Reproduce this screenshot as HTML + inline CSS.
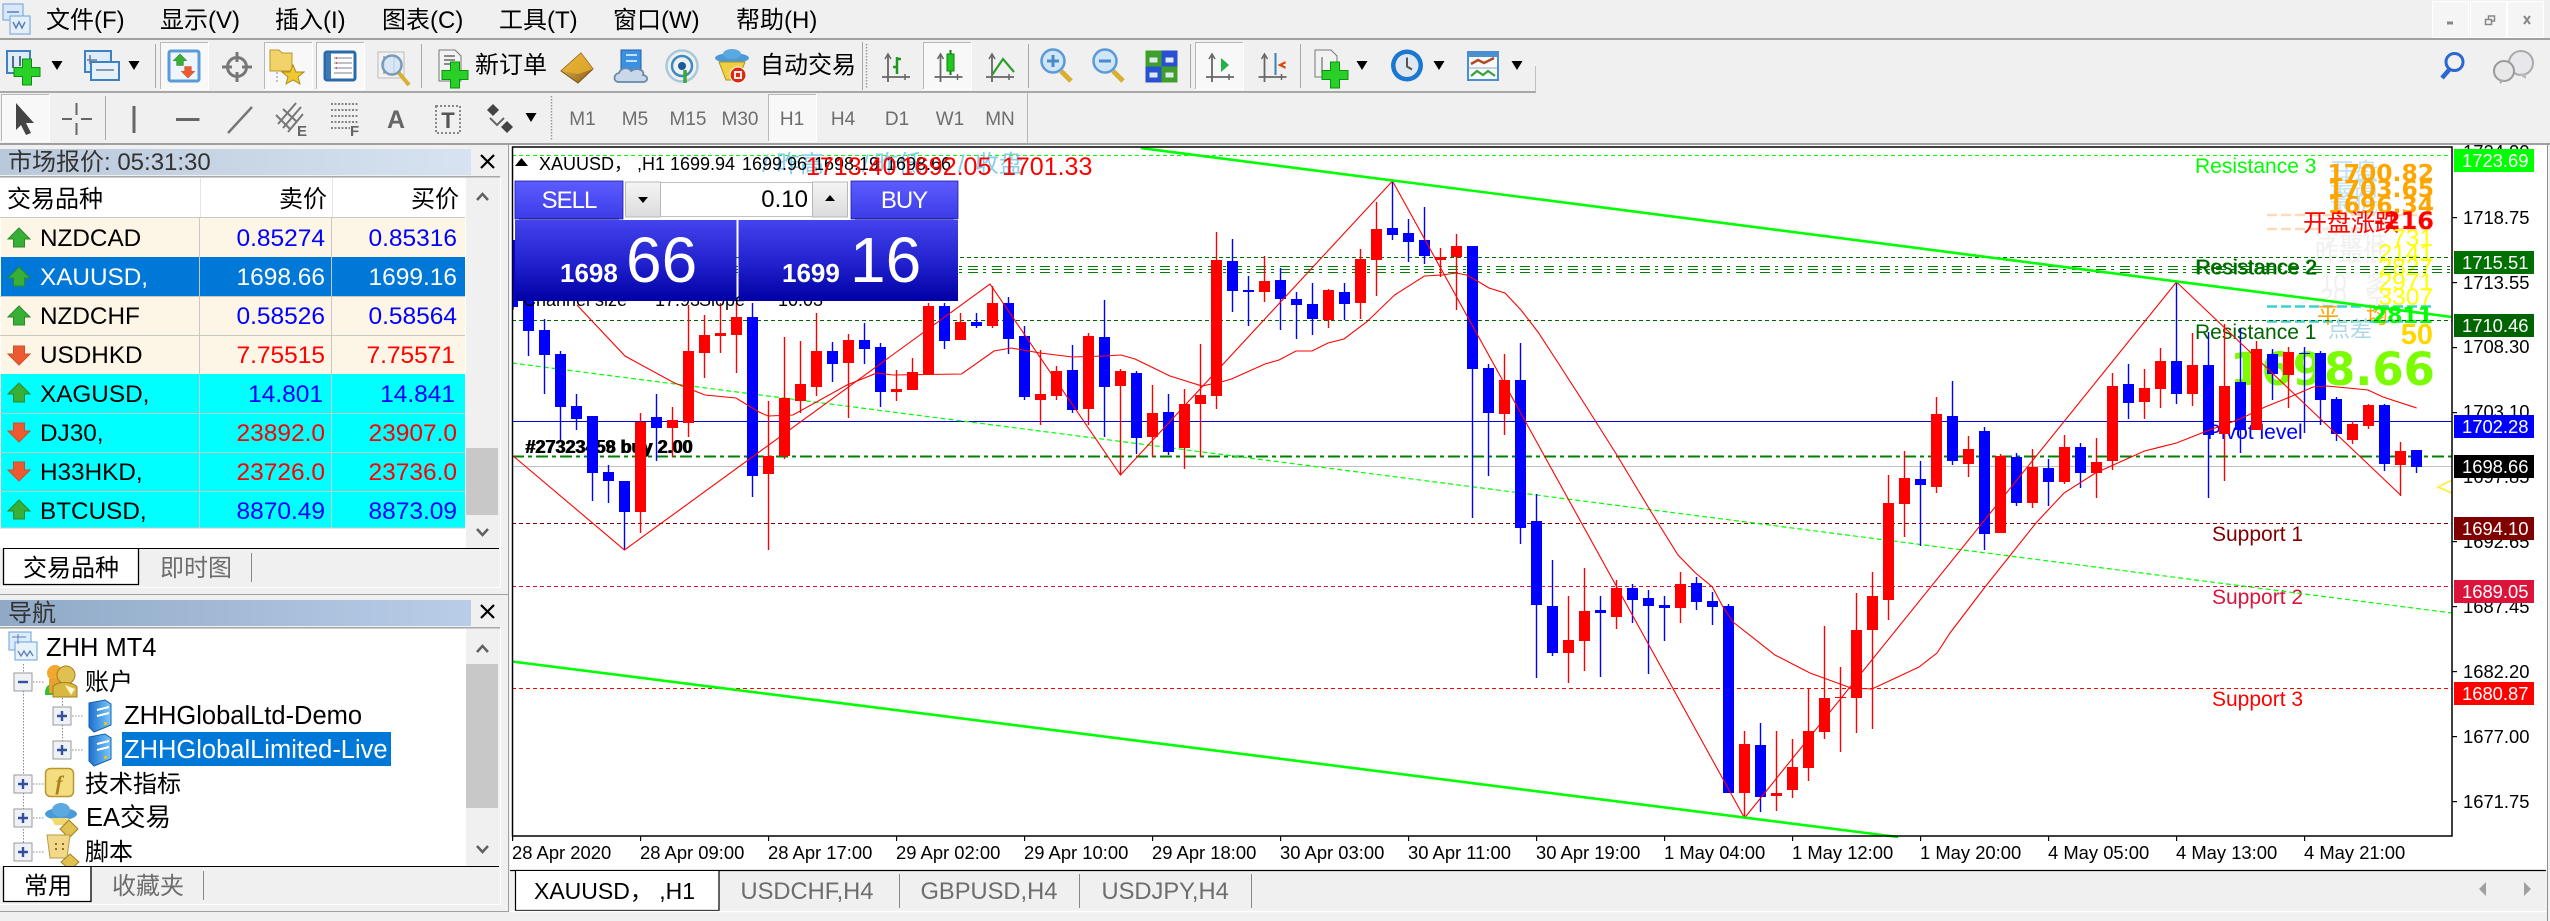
<!DOCTYPE html>
<html><head><meta charset="utf-8"><style>
html,body{margin:0;padding:0;background:#f0f0f0;width:2550px;height:921px;overflow:hidden}
svg{display:block}
text{font-family:"Liberation Sans","Noto Sans CJK SC",sans-serif;white-space:pre}
.u{font-size:24px;fill:#000}
.v{font-size:25.500px;fill:#000}
.s{font-size:24.300px;fill:#000}
.g{font-size:24px;fill:#6d6d6d}
.t{font-size:18.400px;fill:#000}
.l{font-size:18.400px;fill:#fff}
.p{font-size:19px;fill:#6d6d6d;text-anchor:middle}
.n{font-size:24.500px;text-anchor:end}
.r{font-size:21px}
text.db,.db text{font-family:"DejaVu Sans",sans-serif;font-weight:bold}
</style></head><body>
<svg width="2550" height="921" viewBox="0 0 2550 921" xmlns="http://www.w3.org/2000/svg">
<defs>
<linearGradient id="tA" x1="0" x2="1" y1="0" y2="0"><stop offset="0" stop-color="#b9c8da"/><stop offset="1" stop-color="#d7e3f1"/></linearGradient>
<linearGradient id="tB" x1="0" x2="1" y1="0" y2="0"><stop offset="0" stop-color="#8fa9c6"/><stop offset="1" stop-color="#b9cde8"/></linearGradient>
<linearGradient id="bS" x1="0" x2="0" y1="0" y2="1"><stop offset="0" stop-color="#5c5cff"/><stop offset="1" stop-color="#3c3ce8"/></linearGradient>
<linearGradient id="bB" x1="0" x2="0" y1="0" y2="1"><stop offset="0" stop-color="#4444ee"/><stop offset=".55" stop-color="#2020cc"/><stop offset="1" stop-color="#0000a4"/></linearGradient>
<linearGradient id="sp" x1="0" x2="0" y1="0" y2="1"><stop offset="0" stop-color="#f4f4f4"/><stop offset="1" stop-color="#dcdcdc"/></linearGradient>
<linearGradient id="gold" x1="0" x2="1" y1="0" y2="1"><stop offset="0" stop-color="#f0c860"/><stop offset="1" stop-color="#8a5a10"/></linearGradient>
<linearGradient id="srv" x1="0" x2="1" y1="0" y2="0"><stop offset="0" stop-color="#1a70d0"/><stop offset="1" stop-color="#7cc8f8"/></linearGradient>
<g id="plus"><path d="M-4.500-13h9v8.500h8.500v9h-8.500v8.500h-9v-8.500h-8.500v-9h8.500z" fill="#28d028" stroke="#0c900c" stroke-width="1"/></g>
<g id="up"><path d="M0-10 11 1H5.500V9H-5.500V1H-11z" fill="#38b038" stroke="#2a8a2a" stroke-width="1"/></g>
<g id="dn"><path d="M0 10 11-1H5.500V-9H-5.500V-1H-11z" fill="#ee5a30" stroke="#c85030" stroke-width="1"/></g>
<g id="axes" fill="none" stroke="#666" stroke-width="1.800"><path d="M0-13V14M-6 9H22"/><path d="M-3-9 0-14 3-9M17 6V12" stroke-width="1.500"/></g>
<g id="drop"><path d="M-5.500-5H5.500L0 4z" fill="#000"/></g>
<g id="pb"><rect x="-9" y="-9" width="18" height="18" fill="#eef1f6" stroke="#9a9a9a"/><path d="M-5 0H5M0-5V5" stroke="#34509c" stroke-width="2.400"/></g>
<g id="mb"><rect x="-9" y="-9" width="18" height="18" fill="#eef1f6" stroke="#9a9a9a"/><path d="M-5 0H5" stroke="#34509c" stroke-width="2.400"/></g>
<g id="srvi"><path d="M-11-13 5-16 11-12V9L-6 16-11 11z" fill="url(#srv)" stroke="#1060b0"/><path d="M-3-6 9-9M-3 0 9-3" stroke="#fff" stroke-width="2"/><rect x="4" y="6" width="3" height="3" fill="#e8c020"/></g>
</defs>

<!-- base -->
<rect width="2550" height="921" fill="#f0f0f0"/>

<!-- menu -->
<g transform="translate(3,2)"><rect x="0" y="2" width="20" height="16" fill="#d8e8f8" stroke="#6aa0d8"/><rect x="7" y="14" width="20" height="18" fill="#e4effa" stroke="#6aa0d8"/><path d="M4 10h12M10 20l3 6 3-6 3 6 3-6" fill="none" stroke="#5a7fb5" stroke-width="1.500"/></g>
<text class="u" x="46" y="28">文件(F)</text>
<text class="u" x="160" y="28">显示(V)</text>
<text class="u" x="275" y="28">插入(I)</text>
<text class="u" x="382" y="28">图表(C)</text>
<text class="u" x="499" y="28">工具(T)</text>
<text class="u" x="613" y="28">窗口(W)</text>
<text class="u" x="736" y="28">帮助(H)</text>
<g fill="#f5f5f5" stroke="#fff"><rect x="2432.500" y="1.500" width="36" height="36"/><rect x="2470.500" y="1.500" width="36" height="36"/><rect x="2507.500" y="1.500" width="36" height="36"/></g>
<rect x="2447" y="21.500" width="6" height="3" fill="#888"/>
<path d="M2485.500 24.500v-5h6v5zM2488.500 19v-3h6v5h-3" fill="none" stroke="#888" stroke-width="1.500"/>
<path d="M2524 16l6 8M2530 16l-6 8" stroke="#888" stroke-width="2" fill="none"/>
<rect x="0" y="38" width="2550" height="2" fill="#a0a0a0"/>

<!-- toolbar lines -->
<rect x="0" y="91" width="1536" height="2" fill="#a8a8a8"/>
<rect x="1535" y="66" width="1" height="26" fill="#c0c0c0"/>
<rect x="0" y="143" width="2550" height="2" fill="#a0a0a0"/>
<rect x="1027" y="93" width="1" height="50" fill="#b8b8b8"/>

<!-- pressed boxes -->
<g fill="#f8f8f8" stroke="#fff">
<rect x="160.500" y="42.500" width="48" height="47"/><rect x="264.500" y="42.500" width="48" height="47"/><rect x="316.500" y="42.500" width="48" height="47"/>
<rect x="923.500" y="42.500" width="48" height="47"/><rect x="1195.500" y="42.500" width="48" height="47"/>
<rect x="1.500" y="94.500" width="48" height="47"/><rect x="768.500" y="94.500" width="48" height="47"/></g>
<path d="M160.500 89V42.500H208M264.500 89V42.500H312M316.500 89V42.500H364M923.500 89V42.500H971M1195.500 89V42.500H1243M1.500 141V94.500H49M768.500 141V94.500H816" fill="none" stroke="#b8b8b8"/>
<!-- seps -->
<g fill="#a8a8a8"><rect x="155" y="44" width="1" height="44"/><rect x="421" y="44" width="1" height="44"/><rect x="862" y="42" width="1" height="48"/><rect x="1028" y="44" width="1" height="44"/><rect x="1190" y="44" width="1" height="44"/><rect x="1300" y="44" width="1" height="44"/><rect x="105" y="96" width="1" height="44"/></g>
<path d="M866.500 44V88M551.500 96V140" stroke="#999" stroke-dasharray="1.500 1.500" stroke-width="1.500"/>

<!-- TB1 icons -->
<g transform="translate(18,61)"><rect x="-11" y="-10" width="23" height="22" fill="#dcecfa" stroke="#3f80c0" stroke-width="2"/><path d="M-5-5V7M2-5V5" stroke="#5a6a80" stroke-width="2"/><use href="#plus" x="9" y="11"/></g>
<use href="#drop" x="57" y="66"/>
<g transform="translate(100,64)"><rect x="-15" y="-13" width="26" height="21" fill="#dcecfa" stroke="#3f80c0" stroke-width="2"/><rect x="-9" y="-2" width="28" height="18" fill="#e6f1fb" stroke="#3f80c0" stroke-width="2"/><path d="M-10-9V0M-13-4h10M-4 6H14" stroke="#6a7a90" stroke-width="1.500" fill="none"/></g>
<use href="#drop" x="134" y="66"/>
<g transform="translate(184,66)"><rect x="-15" y="-15" width="30" height="30" rx="2" fill="#eef5fc" stroke="#5a9ad8" stroke-width="3"/><use href="#up" transform="translate(-4,-6) scale(.6)"/><use href="#dn" transform="translate(4,6) scale(.6)"/></g>
<g transform="translate(237,67)" fill="none" stroke="#777" stroke-width="3"><circle r="9.500"/><path d="M0-15V-5M0 5V15M-15 0H-5M5 0H15"/></g>
<g transform="translate(287,65)"><path d="M-17-15H-8L-5-12H5V6H-17z" fill="#f2d36a" stroke="#b89a30"/><path d="M6 0 9 7 17 7 11 12 13 19 6 15-1 19 1 12-5 7 3 7z" fill="#f2c830" stroke="#a88a20"/><path d="M-10 7V18" stroke="#888" stroke-dasharray="2 2"/></g>
<g transform="translate(340,66)"><rect x="-15" y="-14" width="30" height="28" rx="2" fill="#fff" stroke="#2a6aa8" stroke-width="3"/><rect x="-14" y="-13" width="5" height="26" fill="#3a7ab8"/><path d="M-6-8H12M-6-3H12M-6 2H12M-6 7H12" stroke="#99a" stroke-width="1.300"/><path d="M-4-8h1M-4-3h1M-4 2h1" stroke="#e44" stroke-width="2"/></g>
<g transform="translate(392,66)"><rect x="-14" y="-14" width="26" height="26" fill="#f2f2f2" stroke="#bbb"/><path d="M-8-10V8M2-10V8" stroke="#999" stroke-width="1.500"/><circle cx="0" cy="-1" r="9.500" fill="#cfe3f5" fill-opacity=".8" stroke="#7a9ab8" stroke-width="2.500"/><path d="M7 7 17 19" stroke="#d8b030" stroke-width="4"/></g>
<g transform="translate(451,65)"><path d="M-12-15H4L10-9V16H-12z" fill="#f2f2f2" stroke="#777"/><path d="M-7-9H4M-7-5H4M-7-1H0" stroke="#666" stroke-width="1.500"/><use href="#plus" x="4" y="10"/></g>
<text class="u" x="475" y="73">新订单</text>
<g transform="translate(577,68)"><path d="M4-15 16 1 1 15-16 3z" fill="url(#gold)" stroke="#7a5010"/><path d="M4-15-16 3 1 6 16 1z" fill="#e8b030" fill-opacity=".8"/></g>
<g transform="translate(631,65)"><path d="M-10-15H10V6H-10z" fill="#3c90e0" stroke="#1a60b0"/><path d="M-5-10H6M-5-4H6" stroke="#bfe4ff" stroke-width="2"/><path d="M-12 17C-18 17-18 9-12 8-10 2-2 2 0 6 6 2 14 5 12 10 18 11 17 17 12 17z" fill="#c8d8ea" stroke="#6a88a8" stroke-width="1.800"/></g>
<g transform="translate(682,66)" fill="none"><circle r="15.500" stroke="#a8c8dc" stroke-width="2.500"/><circle r="10" stroke="#3c8ac0" stroke-width="2.500"/><circle r="4" fill="#1a5a9a"/><path d="M3 4V17" stroke="#3aa83a" stroke-width="3.500"/></g>
<g transform="translate(732,66)"><ellipse cy="-8" rx="17" ry="5" fill="#4a9ad8"/><ellipse cy="-12" rx="9" ry="5" fill="#5aaae0"/><path d="M-13-4H13L6 14H-6z" fill="#f0d040" stroke="#b09020"/><circle cx="6" cy="9" r="8" fill="#e02810" stroke="#fff" stroke-width="1"/><rect x="2" y="5" width="8" height="8" fill="#fff" fill-opacity=".9"/><rect x="4" y="7" width="4" height="4" fill="#e02810"/></g>
<text class="u" x="760" y="73">自动交易</text>

<g transform="translate(888,68)"><use href="#axes"/><path d="M9-11V6M9-9H13M5-1H9" stroke="#1a9a1a" stroke-width="2.500" fill="none"/></g>
<g transform="translate(940.500,68)"><use href="#axes"/><path d="M10-18V7" stroke="#108010" stroke-width="2"/><rect x="6.500" y="-14" width="7" height="17" fill="#22c822" stroke="#108010"/></g>
<g transform="translate(992,68)"><use href="#axes"/><path d="M0 7 11-9 22 4" fill="none" stroke="#2aa02a" stroke-width="2.200"/></g>
<g transform="translate(1053,61)"><circle r="11.500" fill="#cfe6fa" stroke="#5a9ad8" stroke-width="2.500"/><path d="M-6 0H6M0-6V6" stroke="#4a8ac8" stroke-width="3"/><path d="M8 10 18 20" stroke="#d8b030" stroke-width="5"/></g>
<g transform="translate(1105,61)"><circle r="11.500" fill="#cfe6fa" stroke="#5a9ad8" stroke-width="2.500"/><path d="M-6 0H6" stroke="#4a8ac8" stroke-width="3"/><path d="M8 10 18 20" stroke="#d8b030" stroke-width="5"/></g>
<g transform="translate(1161.500,66.500)"><rect x="-16" y="-16" width="16" height="16" fill="#3ea028"/><rect x="0" y="-16" width="16" height="16" fill="#2850d0"/><rect x="-16" y="0" width="16" height="16" fill="#2850d0"/><rect x="0" y="0" width="16" height="16" fill="#3ea028"/><path d="M-12-9h8v5h-8zM4-9h8v5H4zM-12 6h8v5h-8zM4 6h8v5H4z" fill="#dde8f0"/></g>
<g transform="translate(1212,68)"><use href="#axes"/><path d="M9-10 17-3 9 4z" fill="#22b04a"/></g>
<g transform="translate(1264.500,68)"><use href="#axes"/><path d="M11-15V7" stroke="#3a80b8" stroke-width="2"/><path d="M13-3 21-7V-4H19V-2H21V1z" fill="#d84a10"/></g>
<g transform="translate(1326,65)"><path d="M-11-15H5L11-9V12H-11z" fill="#f2f2f2" stroke="#777"/><path d="M-4-8V8" stroke="#888" stroke-width="1.500"/><use href="#plus" x="9" y="10"/></g>
<use href="#drop" x="1362" y="66"/>
<g transform="translate(1407,65.500)"><circle r="16" fill="#1a78d0"/><circle r="11.500" fill="#dfe8f0"/><path d="M0-8V1L5 4" stroke="#555" stroke-width="2" fill="none"/></g>
<use href="#drop" x="1439" y="66"/>
<g transform="translate(1483,66)"><rect x="-15" y="-14" width="30" height="28" fill="#f6fafd" stroke="#4a90d0" stroke-width="2"/><rect x="-14" y="-13" width="28" height="4" fill="#4a90d0"/><path d="M-12-2-5-6 1-3 11-8" stroke="#b04a20" stroke-width="2.500" fill="none"/><path d="M-14 2H14" stroke="#9ab"/><path d="M-12 10-6 5 0 9 5 5 12 10" stroke="#3aa03a" stroke-width="2.200" fill="none"/></g>
<use href="#drop" x="1517" y="66"/>
<g fill="none"><circle cx="2454.500" cy="62" r="8.500" stroke="#2a68d0" stroke-width="3"/><path d="M2449 70 2442 78" stroke="#2a68d0" stroke-width="4.500"/></g>
<g><circle cx="2521" cy="63" r="12" fill="#e8e8ec" stroke="#aaa" stroke-width="2"/><path d="M2518 74 2526 79 2526 73z" fill="#bbb"/><circle cx="2504" cy="71" r="10" fill="#e8e8e8" stroke="#999" stroke-width="2"/><path d="M2499 79 2500 84 2505 80z" fill="#aaa"/></g>

<!-- TB2 -->
<path d="M16 103V130L21 125 26 135 31 133 26 123 34 123z" fill="#444"/>
<path d="M76.500 103V115M76.500 123V135M62 119H72M81 119H92" stroke="#666" stroke-width="2"/>
<path d="M134 106V133" stroke="#666" stroke-width="3"/>
<path d="M176 119.500H199.500" stroke="#666" stroke-width="3"/>
<path d="M228 133 252 107" stroke="#777" stroke-width="2.500"/>
<g stroke="#777" stroke-width="2" fill="none"><path d="M278 124 296 103M283 128 301 107M288 132 303 114M283 109 296 121M276 115 290 129"/></g>
<text x="297" y="136" font-size="15" font-weight="bold" fill="#666">E</text>
<g stroke="#777" stroke-width="1.800" stroke-dasharray="2 1.500"><path d="M331 104H358M331 110H358M331 116H358M331 122H358M331 128H350"/></g>
<text x="350" y="136" font-size="15" font-weight="bold" fill="#666">F</text>
<text x="396" y="128" font-size="25" font-weight="bold" fill="#666" text-anchor="middle">A</text>
<rect x="436" y="106" width="24" height="27" fill="none" stroke="#888" stroke-width="2" stroke-dasharray="2 2"/>
<text x="448" y="128" font-size="22" fill="#555" text-anchor="middle" font-weight="bold">T</text>
<g fill="#444"><path d="M493 104 499 110 493 116 487 110z"/><path d="M507 121 513 127 507 133 501 127z"/></g><path d="M490 118 497 125 504 118" fill="none" stroke="#666" stroke-width="2"/>
<use href="#drop" x="531" y="118"/>
<text class="p" x="582.500" y="125">M1</text><text class="p" x="635" y="125">M5</text><text class="p" x="688" y="125">M15</text><text class="p" x="740" y="125">M30</text><text class="p" x="792" y="125">H1</text><text class="p" x="843" y="125">H4</text><text class="p" x="897" y="125">D1</text><text class="p" x="950" y="125">W1</text><text class="p" x="1000" y="125">MN</text>

<!-- ===== Market Watch ===== -->
<rect x="0" y="143" width="508" height="1" fill="#a0a0a0"/>
<rect x="0" y="149" width="471" height="26" fill="url(#tA)"/>
<text x="8" y="170" font-size="24" fill="#333">市场报价: 05:31:30</text>
<path d="M481 155 494 168M494 155 481 168" stroke="#000" stroke-width="2.200"/>
<rect x="0" y="176" width="500" height="1.500" fill="#a8a8a8"/>
<rect x="0" y="178" width="466" height="370" fill="#fff"/>
<rect x="466" y="178" width="34" height="370" fill="#f0f0f0"/>
<rect x="466" y="448" width="32" height="67" fill="#c8c8c8"/>
<path d="M477 200 482.500 194 488 200M477 529 482.500 535 488 529" fill="none" stroke="#606060" stroke-width="2.500"/>
<text class="u" x="7" y="207">交易品种</text>
<text class="u" x="327" y="207" text-anchor="end">卖价</text>
<text class="u" x="459" y="207" text-anchor="end">买价</text>
<path d="M200.500 178V217M332.500 178V217" stroke="#e4e4e4"/>
<rect x="1" y="218" width="464" height="39" fill="#fdf5e6"/>
<rect x="1" y="257" width="464" height="39" fill="#0078d7"/>
<rect x="1" y="296" width="464" height="78" fill="#fdf5e6"/>
<rect x="1" y="374" width="464" height="154" fill="#0ff"/>
<g stroke="#c8c8c8"><path d="M0 217.500H465M0 296.500H465M0 335.500H465M0 413.500H465M0 452.500H465M0 491.500H465M0 528H465M199.500 218V528M331.500 218V528"/></g>
<use href="#up" x="19" y="238"/><use href="#up" x="19" y="277"/><use href="#up" x="19" y="316"/><use href="#dn" x="19" y="355"/><use href="#up" x="19" y="393"/><use href="#dn" x="19" y="432"/><use href="#dn" x="19" y="471"/><use href="#up" x="19" y="510"/>
<text class="s" x="40" y="246">NZDCAD</text>
<text class="s" x="40" y="285" style="fill:#fff">XAUUSD,</text>
<text class="s" x="40" y="324">NZDCHF</text>
<text class="s" x="40" y="363">USDHKD</text>
<text class="s" x="40" y="402">XAGUSD,</text>
<text class="s" x="40" y="441">DJ30,</text>
<text class="s" x="40" y="480">H33HKD,</text>
<text class="s" x="40" y="519">BTCUSD,</text>
<text class="n" x="325" y="246" fill="#00f">0.85274</text><text class="n" x="457" y="246" fill="#00f">0.85316</text>
<text class="n" x="325" y="324" fill="#00f">0.58526</text><text class="n" x="457" y="324" fill="#00f">0.58564</text>
<text class="n" x="323" y="402" fill="#00f">14.801</text><text class="n" x="455" y="402" fill="#00f">14.841</text>
<text class="n" x="325" y="519" fill="#00f">8870.49</text><text class="n" x="457" y="519" fill="#00f">8873.09</text>
<text class="n" x="325" y="285" fill="#fff">1698.66</text><text class="n" x="457" y="285" fill="#fff">1699.16</text>
<text class="n" x="325" y="363" fill="#f00">7.75515</text><text class="n" x="455" y="363" fill="#f00">7.75571</text>
<text class="n" x="325" y="441" fill="#f00">23892.0</text><text class="n" x="457" y="441" fill="#f00">23907.0</text>
<text class="n" x="325" y="480" fill="#f00">23726.0</text><text class="n" x="457" y="480" fill="#f00">23736.0</text>
<rect x="0" y="548" width="500" height="2" fill="#f0f0f0"/><path d="M3 548.500H499" stroke="#000"/>
<path d="M3.500 549V584.500H138.500V549H3.500z" fill="#fff"/><path d="M3.500 549V584.500H138.500V549" fill="none" stroke="#000" stroke-width="1.300"/>
<text class="u" x="23" y="576">交易品种</text>
<text class="g" x="160" y="576">即时图</text>
<path d="M251.500 553V582" stroke="#888"/>
<path d="M0 594.500H508M508.500 143V912" stroke="#a0a0a0"/>
<path d="M500.500 178V587" stroke="#fff"/>
<rect x="0" y="587" width="501" height="1" fill="#fff"/>

<!-- ===== Navigator ===== -->
<rect x="0" y="600" width="471" height="26" fill="url(#tB)"/>
<text x="8" y="621" font-size="24" fill="#333">导航</text>
<path d="M481 605 494 618M494 605 481 618" stroke="#000" stroke-width="2.200"/>
<rect x="0" y="627" width="500" height="1.500" fill="#a8a8a8"/>
<rect x="0" y="629" width="466" height="237" fill="#fff"/>
<rect x="466" y="629" width="34" height="237" fill="#f0f0f0"/>
<rect x="466" y="664" width="32" height="144" fill="#c8c8c8"/>
<path d="M477 652 482.500 646 488 652M477 846 482.500 852 488 846" fill="none" stroke="#606060" stroke-width="2.500"/>
<path d="M23.500 664V843M62.500 698V750M33 682H44M72 716H84M72 750H84M33 784H44M33 818H44M33 852H44" stroke="#888" stroke-dasharray="1.500 1.500" fill="none"/>
<g transform="translate(8,631)"><rect x="1" y="1" width="22" height="18" fill="#dcecfa" stroke="#6aa0d8"/><rect x="7" y="11" width="22" height="18" fill="#e8f2fb" stroke="#6aa0d8"/><path d="M10 20l3 5 3-5 3 5 3-5 3 5" fill="none" stroke="#5a7fb5" stroke-width="1.300"/><path d="M4 6h14M10 3v10" stroke="#5a7fb5"/></g>
<text class="v" x="46" y="656">ZHH MT4</text>
<use href="#mb" x="23" y="682"/>
<g transform="translate(61,681)"><path d="M-16 12C-16 4-10 2-8 4V14H-16z" fill="#30c030"/><circle cx="-6" cy="-8" r="8" fill="#f0a830"/><rect x="-12" y="-2" width="14" height="14" fill="#e8a030"/><circle cx="5" cy="-6" r="9" fill="#e0c050" stroke="#a08020"/><path d="M-8 16V6C-5 0 12 0 16 6V16z" fill="#d8b840" stroke="#a08020"/><path d="M4 4 10 14 14 8" fill="#fff8d0"/></g>
<text class="u" x="85" y="690">账户</text>
<use href="#pb" x="62" y="716"/><use href="#srvi" x="100" y="716"/>
<text class="v" x="124" y="724">ZHHGlobalLtd-Demo</text>
<use href="#pb" x="62" y="750"/><use href="#srvi" x="100" y="750"/>
<rect x="122" y="732" width="269" height="34" fill="#0078d7"/>
<text class="v" x="124" y="758" style="fill:#fff">ZHHGlobalLimited-Live</text>
<use href="#pb" x="23" y="784"/>
<rect x="45.500" y="768.500" width="28" height="28" rx="5" fill="#f4dc80" stroke="#b8982c" stroke-width="1.500"/>
<text x="59" y="790" font-size="21" style="font-family:'Liberation Serif',serif;font-style:italic;font-weight:bold" fill="#a8801c" text-anchor="middle">f</text>
<text class="u" x="85" y="792">技术指标</text>
<use href="#pb" x="23" y="818"/>
<g transform="translate(61,814)"><ellipse rx="16" ry="6" fill="#4a9ad8"/><ellipse cy="-4" rx="9" ry="7" fill="#5aaae0"/><path d="M-10 4H8L4 11H-6z" fill="#f0d870"/><path d="M8 6 17 15 8 24-1 15z" fill="#e0c050" stroke="#a08020"/></g>
<text class="v" x="86" y="826">EA交易</text>
<use href="#pb" x="23" y="852"/>
<g transform="translate(59,848)"><path d="M-12-13H11L8 10H-9z" fill="#f2d88a" stroke="#b89a40"/><path d="M-4-4h2M3-4h2M-4 1h2M3 1h2" stroke="#8a7028" stroke-width="2"/><path d="M11 6 20 14 11 22 2 14z" fill="#e0c050" stroke="#a08020"/></g>
<text class="u" x="85" y="860">脚本</text>
<rect x="0" y="866" width="500" height="46" fill="#f0f0f0"/>
<path d="M3 866.500H499" stroke="#000"/>
<path d="M3.500 867V901.500H91V867z" fill="#fff"/><path d="M3.500 867V901.500H91V867" fill="none" stroke="#000" stroke-width="1.300"/>
<text class="u" x="24" y="894">常用</text>
<text class="g" x="112" y="894">收藏夹</text>
<path d="M203.500 871V900" stroke="#888"/>
<path d="M0 904.500H501M500.500 628V904" stroke="#fff"/>
<path d="M0 911.500H508" stroke="#a0a0a0"/>

<!-- ===== Chart ===== -->
<rect x="510" y="145" width="2037" height="726" fill="#fff"/>
<path d="M2547.500 143V921" stroke="#909090"/>

<!-- labels below candles -->
<text class="r" x="2195" y="173" fill="#0f0">Resistance 3</text>
<text class="r" x="2195" y="274" fill="#008000">Resistance 2</text>
<text class="r" x="2196" y="274.500" fill="#006400">Resistance 2</text>
<text class="r" x="2195" y="339" fill="#006400">Resistance 1</text>
<text class="r" x="2207" y="439" fill="#00f">Pivot level</text>
<text class="r" x="2212" y="541" fill="#800000">Support 1</text>
<text class="r" x="2212" y="604" fill="#dc143c">Support 2</text>
<text class="r" x="2212" y="706" fill="#f00">Support 3</text>
<!-- info block -->
<g font-size="24" fill="#bfe3f2"><text x="2330" y="180">开盘</text><text x="2330" y="196">最高</text><text x="2330" y="212">最低</text></g>
<path d="M2267 215H2433M2267 229H2433" stroke="#ffdab9" stroke-width="2.500" stroke-dasharray="10 4"/>
<g font-size="24" fill="#f0f0f0"><text x="2315" y="246">今最低</text><text x="2315" y="261">昨最低</text><text x="2320" y="291">10</text><text x="2320" y="305">20</text><text x="2365" y="291">多</text><text x="2365" y="305">空</text></g>
<path d="M2267 306.500H2433M2267 321.500H2433" stroke="#3cd0d0" stroke-width="2.500" stroke-dasharray="10 4"/>
<g text-anchor="end" class="db" font-size="23.400" fill="#ffa500"><text x="2434" y="181">1700.82</text><text x="2434" y="197">1703.65</text><text x="2434" y="213">1696.34</text></g>
<text x="2303" y="231" font-size="24" fill="#f00">开盘涨跌</text>
<text x="2434" y="229" class="db" font-size="24" fill="#f00" text-anchor="end">-216</text>
<g font-size="24.500" fill="#ff0" text-anchor="end"><text x="2433" y="246">731</text><text x="2433" y="261">2141</text><text x="2433" y="275">2827</text><text x="2433" y="290">2971</text><text x="2433" y="305">3307</text></g>
<text x="2317" y="323" font-size="22" fill="#ffa500">平</text><text x="2366" y="323" font-size="22" fill="#ffa500">均</text>
<text x="2433" y="323" class="db" font-size="22" fill="#0f0" text-anchor="end">2811</text>
<text x="2328" y="337" font-size="22" fill="#add8e6">点差</text>
<text x="2433" y="344" font-size="29" font-weight="bold" fill="#ffd700" text-anchor="end">50</text>
<text x="2435" y="385" class="db" font-size="45" fill="#7cfc00" text-anchor="end">1698.66</text>

<!-- order text -->
<text x="525" y="453" font-size="18" font-weight="bold" fill="#000">#27323459 buy 2.00</text>
<text x="526" y="453" font-size="18" font-weight="bold" fill="#000">#27323458 buy 2.00</text>

<!-- horizontal lines -->
<g fill="none" shape-rendering="crispEdges">
<path d="M512 155.500H2452" stroke="#0f0" stroke-dasharray="4 3"/>
<path d="M512 257.500H2452" stroke="#007000" stroke-dasharray="4 3"/>
<path d="M512 266.500H2452M512 269.500H2452M512 272.500H2452" stroke="#008000" stroke-width="1.300" stroke-dasharray="10 5 3 6"/>
<path d="M512 320.500H2452" stroke="#006400" stroke-dasharray="4 3"/>
<path d="M512 421.500H2452" stroke="#0000e0"/>
<path d="M512 466.500H2452" stroke="#c0c0c0"/>
<path d="M512 456.500H2452" stroke="#008000" stroke-width="2" stroke-dasharray="12 4 4 4"/>
<path d="M512 523.500H2452" stroke="#800000" stroke-dasharray="4 3"/>
<path d="M512 586.500H2452" stroke="#dc143c" stroke-dasharray="4 3"/>
<path d="M512 688.500H2452" stroke="#f00" stroke-dasharray="4 3"/>
</g>
<!-- channel -->
<path d="M512 363 2452 613" stroke="#0f0" stroke-width="1.200" stroke-dasharray="5 3" fill="none"/>

<!-- candles -->
<path fill="none" stroke="#00f" stroke-width="1.400" d="M513 240V310M528.500 300V356M544.500 319V394M560.500 351V440M576.500 394V430M592.500 416V501M608.500 465V503M624.500 481V550M656.500 394V461M752.500 303V497M832.500 342V382M864.500 323V364M880.500 343V407M944.500 303V349M976.500 313V328M1008.500 297V354M1024.500 326V400M1072.500 345V413M1104.500 300V437M1136.500 371V454M1168.500 394V455M1232.500 239V312M1248.500 276V326M1280.500 268V330M1296.500 292V339M1312.500 283V335M1344.500 283V320M1392.500 181V240M1408.500 219V262M1424.500 207V264M1472.500 246V518M1488.500 364V476M1520.500 343V544M1536.500 494V678M1552.500 560V656M1600.500 596V677M1632.500 584V623M1648.500 590V674M1664.500 596V641M1696.500 577V610M1712.500 592V625M1728.500 604V793M1760.500 723V812M1920.500 461V546M1952.500 381V465M1984.500 427V550M2016.500 453V506M2048.500 459V506M2080.500 443V488M2128.500 364V419M2176.500 282V404M2208.500 332V498M2240.500 328V453M2272.500 349V400M2304.500 347V433M2320.500 351V425M2336.500 397V441M2384.500 404V471M2416.500 450V473"/>
<path fill="#00f" d="M512 240h6V307h-6zM523 300h11V331h-11zM539 330h11V355h-11zM555 354h11V407h-11zM571 406h11V419h-11zM587 416h11V473h-11zM603 472h11V481h-11zM619 481h11V512h-11zM651 417h11V428h-11zM747 317h11V476h-11zM827 351h11V364h-11zM859 340h11V349h-11zM875 347h11V392h-11zM939 306h11V341h-11zM971 322h11V326h-11zM1003 303h11V339h-11zM1019 336h11V397h-11zM1067 370h11V410h-11zM1099 337h11V387h-11zM1131 373h11V438h-11zM1163 412h11V452h-11zM1227 261h11V291h-11zM1243 290h11V292h-11zM1275 280h11V299h-11zM1291 299h11V305h-11zM1307 304h11V319h-11zM1339 292h11V304h-11zM1387 228h11V235h-11zM1403 233h11V242h-11zM1419 240h11V256h-11zM1467 246h11V369h-11zM1483 368h11V413h-11zM1515 380h11V528h-11zM1531 521h11V605h-11zM1547 606h11V653h-11zM1595 610h11V613h-11zM1627 588h11V600h-11zM1643 598h11V606h-11zM1659 605h11V608h-11zM1691 583h11V602h-11zM1707 601h11V607h-11zM1723 606h11V793h-11zM1755 745h11V797h-11zM1915 479h11V485h-11zM1947 416h11V461h-11zM1979 431h11V534h-11zM2011 457h11V503h-11zM2043 468h11V482h-11zM2075 447h11V473h-11zM2123 384h11V403h-11zM2171 361h11V394h-11zM2203 365h11V435h-11zM2235 382h11V430h-11zM2267 354h11V374h-11zM2299 353h11V354h-11zM2315 353h11V400h-11zM2331 399h11V434h-11zM2379 405h11V464h-11zM2411 450h11V467h-11z"/>
<path fill="none" stroke="#f00" stroke-width="1.400" d="M640.500 413V533M672.500 407V457M688.500 305V437M704.500 315V378M720.500 303V353M736.500 303V373M768.500 401V550M784.500 337V459M800.500 341V413M816.500 313V396M848.500 334V418M896.500 370V401M912.500 358V390M928.500 303V374M960.500 313V340M992.500 286V328M1040.500 350V425M1056.500 366V400M1088.500 333V425M1120.500 369V475M1152.500 385V457M1184.500 389V469M1200.500 344V457M1216.500 232V409M1264.500 256V302M1328.500 289V328M1360.500 249V319M1376.500 202V296M1440.500 248V277M1456.500 234V310M1504.500 354V435M1568.500 596V683M1584.500 568V671M1616.500 580V629M1680.500 572V623M1744.500 731V818M1776.500 731V811M1792.500 739V798M1808.500 688V781M1824.500 626V739M1840.500 667V752M1856.500 593V733M1872.500 572V729M1888.500 475V620M1904.500 451V537M1936.500 397V493M1968.500 436V477M2000.500 454V533M2032.500 449V508M2064.500 435V484M2096.500 438V498M2112.500 373V470M2144.500 369V419M2160.500 348V408M2192.500 333V406M2224.500 324V481M2256.500 341V430M2288.500 347V408M2352.500 421V444M2368.500 404V429M2400.500 442V496"/>
<path fill="#f00" d="M635 422h11V512h-11zM667 420h11V428h-11zM683 351h11V423h-11zM699 335h11V353h-11zM715 333h11V336h-11zM731 317h11V335h-11zM763 456h11V474h-11zM779 398h11V456h-11zM795 384h11V401h-11zM811 351h11V387h-11zM843 340h11V363h-11zM891 389h11V392h-11zM907 372h11V390h-11zM923 306h11V374h-11zM955 322h11V340h-11zM987 303h11V326h-11zM1035 394h11V400h-11zM1051 371h11V396h-11zM1083 336h11V409h-11zM1115 371h11V386h-11zM1147 413h11V437h-11zM1179 404h11V448h-11zM1195 395h11V404h-11zM1211 260h11V396h-11zM1259 281h11V292h-11zM1323 290h11V320h-11zM1355 259h11V303h-11zM1371 229h11V260h-11zM1435 257h11V260h-11zM1451 246h11V257h-11zM1499 380h11V414h-11zM1563 640h11V653h-11zM1579 611h11V641h-11zM1611 588h11V617h-11zM1675 584h11V608h-11zM1739 744h11V793h-11zM1771 793h11V796h-11zM1787 767h11V790h-11zM1803 731h11V768h-11zM1819 698h11V732h-11zM1835 697h11V698h-11zM1851 630h11V698h-11zM1867 596h11V630h-11zM1883 503h11V600h-11zM1899 478h11V504h-11zM1931 414h11V487h-11zM1963 449h11V464h-11zM1995 456h11V533h-11zM2027 467h11V503h-11zM2059 447h11V482h-11zM2091 462h11V473h-11zM2107 386h11V461h-11zM2139 388h11V402h-11zM2155 361h11V389h-11zM2187 365h11V394h-11zM2219 386h11V434h-11zM2251 349h11V430h-11zM2283 352h11V375h-11zM2347 424h11V440h-11zM2363 405h11V426h-11zM2395 451h11V465h-11z"/>

<!-- zigzag and MA -->
<g fill="none" stroke="#f00" stroke-width="1.100">
<path d="M512 455 624.500 550 990 284 1120.500 475 1392.500 181 1744.500 818 2176.500 282 2400.500 495"/>
<path d="M577 305 625 356 674.500 383 705 395 736 398 759 412 768 416 793 415 847 385 877 373 893 375 961.600 374 994 351 1011 348 1040 353 1072.600 357 1104.700 356 1121 355 1135 359 1170 376 1202 386 1221 382 1231.500 379 1265 364 1279 360 1296 351 1312 351 1328 343 1344 339 1366.600 322 1394.600 295 1424.400 276 1442 275 1456 273 1466.500 275 1479 282 1489 288 1505 293 1521 310 1538 332 1559.500 365 1584 403 1615.600 453 1650 510 1678 555 1695.600 573 1712.400 587 1723 607 1733 622 1775 655 1810 673 1851 688 1872 689 1919 667 1937 653 1950 633 1985 587 2036 523 2064 493 2095.500 473 2144.500 451 2176.500 443 2201.700 433 2240 419 2265 407 2290 397 2313 387 2327 386 2368 390 2383 397 2416.700 408"/>
</g>
<!-- trend lines -->
<path d="M1141 148 2452 317" stroke="#0f0" stroke-width="2.600" fill="none"/>
<path d="M512 661.500 1898 837" stroke="#0f0" stroke-width="2.600" fill="none"/>
<path d="M2452 480 2438 487 2452 493" fill="none" stroke="#ffee44" stroke-width="1.800"/>

<!-- header text hidden partly by panel -->
<g font-size="18" fill="#000"><text x="523" y="306">Channel size</text><text x="655" y="306">17.93</text><text x="699" y="306">Slope</text><text x="778" y="306">10.03</text></g>
<path d="M515 166H528L521.500 158z" fill="#000"/>
<text x="539" y="170" font-size="18" fill="#000">XAUUSD， ,H1</text>
<g font-size="24" fill="#87ceeb"><text x="762" y="172">/</text><text x="776" y="172">昨高</text><text x="862" y="172">/</text><text x="874" y="172">昨低</text><text x="958" y="172">/</text><text x="975" y="172">收盘</text></g>
<g font-size="18" fill="#000"><text x="670" y="170">1699.94</text><text x="742" y="170">1699.96</text><text x="814" y="170">1698.19</text><text x="886" y="170">1698.66</text></g>
<g font-size="25" fill="#f00"><text x="806" y="175">1713.40</text><text x="901" y="175">1692.05</text><text x="1002" y="175">1701.33</text></g>

<!-- trade panel -->
<rect x="623" y="181" width="228" height="38" fill="#fff"/>
<rect x="515" y="181" width="108" height="38" fill="url(#bS)" stroke="#1a1ab0" stroke-width=".8"/>
<rect x="851" y="181" width="107" height="38" fill="url(#bS)" stroke="#1a1ab0" stroke-width=".8"/>
<path d="M519 219H619M855 219H954" stroke="#10108a" stroke-width="1.200"/>
<text x="569" y="208" font-size="24" fill="#fff" text-anchor="middle" letter-spacing="-1">SELL</text>
<text x="904" y="208" font-size="24" fill="#fff" text-anchor="middle" letter-spacing="-1">BUY</text>
<rect x="625.500" y="182" width="35" height="35" fill="url(#sp)" stroke="#b8b8b8"/>
<rect x="812.500" y="182" width="35" height="35" fill="url(#sp)" stroke="#b8b8b8"/>
<path d="M660 216.500H812" stroke="#c0c0c0"/><path d="M660 182.500H812" stroke="#c0c0c0"/>
<path d="M638 197H648L643 203z" fill="#000"/><path d="M825 201H835L830 195z" fill="#000"/>
<text x="808" y="207" font-size="24" fill="#000" text-anchor="end">0.10</text>
<rect x="515" y="220" width="221.500" height="81" fill="url(#bB)"/>
<rect x="738.500" y="220" width="219.500" height="81" fill="url(#bB)"/>
<text x="560" y="282" font-size="26" font-weight="bold" fill="#fff">1698</text>
<text x="626" y="282" font-size="64" fill="#fff">66</text>
<text x="782" y="282" font-size="26" font-weight="bold" fill="#fff">1699</text>
<text x="850" y="282" font-size="64" fill="#fff">16</text>

<!-- frame -->
<rect x="512.500" y="147" width="1939.500" height="689" fill="none" stroke="#000" stroke-width="1.500"/>

<!-- price axis -->
<g fill="#000"><rect x="2452" y="217" width="5" height="1.200"/><rect x="2452" y="282" width="5" height="1.200"/><rect x="2452" y="347" width="5" height="1.200"/><rect x="2452" y="412" width="5" height="1.200"/><rect x="2452" y="541" width="5" height="1.200"/><rect x="2452" y="606" width="5" height="1.200"/><rect x="2452" y="671" width="5" height="1.200"/><rect x="2452" y="736" width="5" height="1.200"/><rect x="2452" y="801" width="5" height="1.200"/></g>
<text class="t" x="2463" y="158">1724.00</text>
<text class="t" x="2463" y="224">1718.75</text>
<text class="t" x="2463" y="289">1713.55</text>
<text class="t" x="2463" y="353">1708.30</text>
<text class="t" x="2463" y="418">1703.10</text>
<text class="t" x="2463" y="483">1697.85</text>
<text class="t" x="2463" y="548">1692.65</text>
<text class="t" x="2463" y="613">1687.45</text>
<text class="t" x="2463" y="678">1682.20</text>
<text class="t" x="2463" y="743">1677.00</text>
<text class="t" x="2463" y="808">1671.75</text>

<rect x="2454" y="149" width="80" height="23" fill="#0f0"/><text class="l" x="2462" y="167">1723.69</text>
<rect x="2454" y="251" width="80" height="23" fill="#007000"/><text class="l" x="2462" y="269">1715.51</text>
<rect x="2454" y="314" width="80" height="23" fill="#006400"/><text class="l" x="2462" y="332">1710.46</text>
<rect x="2454" y="415" width="80" height="23" fill="#00f"/><text class="l" x="2462" y="433">1702.28</text>
<rect x="2454" y="455" width="80" height="23" fill="#000"/><text class="l" x="2462" y="473">1698.66</text>
<rect x="2454" y="517" width="80" height="23" fill="#800000"/><text class="l" x="2462" y="535">1694.10</text>
<rect x="2454" y="580" width="80" height="23" fill="#dc143c"/><text class="l" x="2462" y="598">1689.05</text>
<rect x="2454" y="682" width="80" height="23" fill="#f00"/><text class="l" x="2462" y="700">1680.87</text>

<!-- time axis -->
<g fill="#000"><rect x="512" y="836" width="1.200" height="5"/><rect x="640" y="836" width="1.200" height="5"/><rect x="768" y="836" width="1.200" height="5"/><rect x="896" y="836" width="1.200" height="5"/><rect x="1024" y="836" width="1.200" height="5"/><rect x="1152" y="836" width="1.200" height="5"/><rect x="1280" y="836" width="1.200" height="5"/><rect x="1408" y="836" width="1.200" height="5"/><rect x="1536" y="836" width="1.200" height="5"/><rect x="1664" y="836" width="1.200" height="5"/><rect x="1792" y="836" width="1.200" height="5"/><rect x="1920" y="836" width="1.200" height="5"/><rect x="2048" y="836" width="1.200" height="5"/><rect x="2176" y="836" width="1.200" height="5"/><rect x="2304" y="836" width="1.200" height="5"/></g>
<text class="t" x="512" y="859">28 Apr 2020</text>
<text class="t" x="640" y="859">28 Apr 09:00</text>
<text class="t" x="768" y="859">28 Apr 17:00</text>
<text class="t" x="896" y="859">29 Apr 02:00</text>
<text class="t" x="1024" y="859">29 Apr 10:00</text>
<text class="t" x="1152" y="859">29 Apr 18:00</text>
<text class="t" x="1280" y="859">30 Apr 03:00</text>
<text class="t" x="1408" y="859">30 Apr 11:00</text>
<text class="t" x="1536" y="859">30 Apr 19:00</text>
<text class="t" x="1664" y="859">1 May 04:00</text>
<text class="t" x="1792" y="859">1 May 12:00</text>
<text class="t" x="1920" y="859">1 May 20:00</text>
<text class="t" x="2048" y="859">4 May 05:00</text>
<text class="t" x="2176" y="859">4 May 13:00</text>
<text class="t" x="2304" y="859">4 May 21:00</text>

<!-- bottom tabs -->
<rect x="510" y="871" width="2037" height="41" fill="#f0f0f0"/>
<path d="M510 870.500H2546" stroke="#000" stroke-width="1.300"/>
<path d="M515.500 871V910.500H719V871z" fill="#fff"/><path d="M515.500 871V910.500H719V871" fill="none" stroke="#000" stroke-width="1.200"/>
<text x="534" y="899" font-size="23" fill="#000">XAUUSD， ,H1</text>
<text x="740.500" y="899" font-size="23.700" fill="#6d6d6d">USDCHF,H4</text>
<text x="920.500" y="899" font-size="23.700" fill="#6d6d6d">GBPUSD,H4</text>
<text x="1101.500" y="899" font-size="23.700" fill="#6d6d6d">USDJPY,H4</text>
<path d="M899.500 874V908M1079.500 874V908M1251.500 874V908" stroke="#888"/>
<path d="M2486 882 2479 889 2486 896zM2524 882 2531 889 2524 896z" fill="#a0a0a0"/>
<path d="M510 911.500H2546" stroke="#fff" stroke-width="1.500"/>
</svg>
</body></html>
